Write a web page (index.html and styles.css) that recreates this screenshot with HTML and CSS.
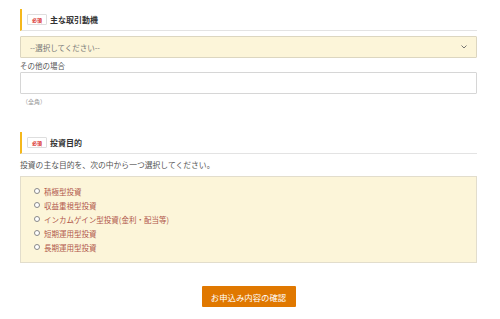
FILE: index.html
```html
<!DOCTYPE html>
<html lang="ja">
<head>
  <meta charset="UTF-8">
  <title>お申込み</title>
  <link rel="stylesheet" href="styles.css">
</head>
<body>

  <div class="form">
    <div class="field-head">
      <span class="badge">必須</span>
      <span class="field-title">主な取引動機</span>
    </div>
    <div class="select-wrap">
      <select class="select">
        <option>--選択してください--</option>
      </select>
      <svg class="chevron" width="6" height="4" viewBox="0 0 6 4"><path d="M0.5 0.5 L3 3 L5.5 0.5" fill="none" stroke="#666" stroke-width="0.9"/></svg>
    </div>
    <div class="label">その他の場合</div>
    <input type="text" class="text-input">
    <div class="note">（全角）</div>

    <div class="field-head second">
      <span class="badge">必須</span>
      <span class="field-title">投資目的</span>
    </div>
    <p class="desc">投資の主な目的を、次の中から一つ選択してください。</p>
    <div class="radio-box">
      <label class="radio"><input type="radio" name="purpose"> 積極型投資</label>
      <label class="radio"><input type="radio" name="purpose"> 収益重視型投資</label>
      <label class="radio"><input type="radio" name="purpose"> インカムゲイン型投資(金利・配当等)</label>
      <label class="radio"><input type="radio" name="purpose"> 短期運用型投資</label>
      <label class="radio"><input type="radio" name="purpose"> 長期運用型投資</label>
    </div>

    <div class="actions">
      <button class="confirm-btn">お申込み内容の確認</button>
    </div>
  </div>

</body>
</html>
```

FILE: styles.css
```css
body {
  margin: 0;
  font-family: "Noto Sans CJK JP", "Noto Sans", sans-serif;
  background-color: #ffffff;
  color: #555;
}

.form {
  width: 457px;
  margin: 0 0 0 20px;
  padding-top: 9px;
}

.field-head {
  display: flex;
  align-items: center;
  height: 21px;
  border-left: 2px solid #f5b81c;
  border-bottom: 1px solid #e3e3e3;
  padding-left: 5px;
}

.field-head.second {
  margin-top: 25px;
}

.badge {
  display: inline-block;
  width: 18px;
  height: 9px;
  line-height: 9px;
  border: 1px solid #dedede;
  background: #fff;
  color: #d7261b;
  font-size: 5px;
  font-weight: bold;
  text-align: center;
  border-radius: 1px;
}

.field-title {
  margin-left: 3px;
  font-size: 8px;
  font-weight: bold;
  color: #333;
}

.select-wrap {
  position: relative;
  margin-top: 5px;
}

.select {
  appearance: none;
  -webkit-appearance: none;
  display: block;
  width: 100%;
  height: 22px;
  margin: 0;
  padding: 0 0 0 9px;
  background-color: #fcf5d9;
  border: 1px solid #dcd6c0;
  border-radius: 1px;
  font-family: inherit;
  font-size: 7.5px;
  color: #777;
  outline: none;
}

.chevron {
  position: absolute;
  right: 10px;
  top: 9px;
}

.label {
  margin-top: 3px;
  font-size: 7.5px;
  line-height: 10px;
  color: #555;
}

.text-input {
  display: block;
  box-sizing: border-box;
  width: 100%;
  height: 22px;
  margin: 1px 0 0 0;
  border: 1px solid #d6d6d6;
  border-radius: 1px;
  background: #fff;
  outline: none;
}

.note {
  margin-top: 3px;
  padding-left: 2px;
  font-size: 6px;
  line-height: 10px;
  color: #999;
}

.desc {
  margin: 6px 0 0 0;
  font-size: 7.8px;
  line-height: 10px;
  color: #555;
}

.radio-box {
  margin-top: 6px;
  padding: 7px 12px 8px 13px;
  background-color: #fcf5d9;
  border: 1px solid #e2ddcc;
}

.radio {
  display: flex;
  align-items: center;
  height: 14px;
  font-size: 7.5px;
  color: #b0564a;
}

.radio input {
  appearance: none;
  -webkit-appearance: none;
  width: 6px;
  height: 6px;
  margin: 0 4px 0 0;
  border: 1px solid #888;
  border-radius: 50%;
  background: #fff;
}

.actions {
  display: flex;
  justify-content: center;
  margin-top: 23px;
}

.confirm-btn {
  width: 94px;
  height: 21px;
  padding: 0;
  background-color: #e07800;
  color: #fff;
  border: none;
  border-radius: 1px;
  font-family: inherit;
  font-size: 8.4px;
  cursor: pointer;
}
```
